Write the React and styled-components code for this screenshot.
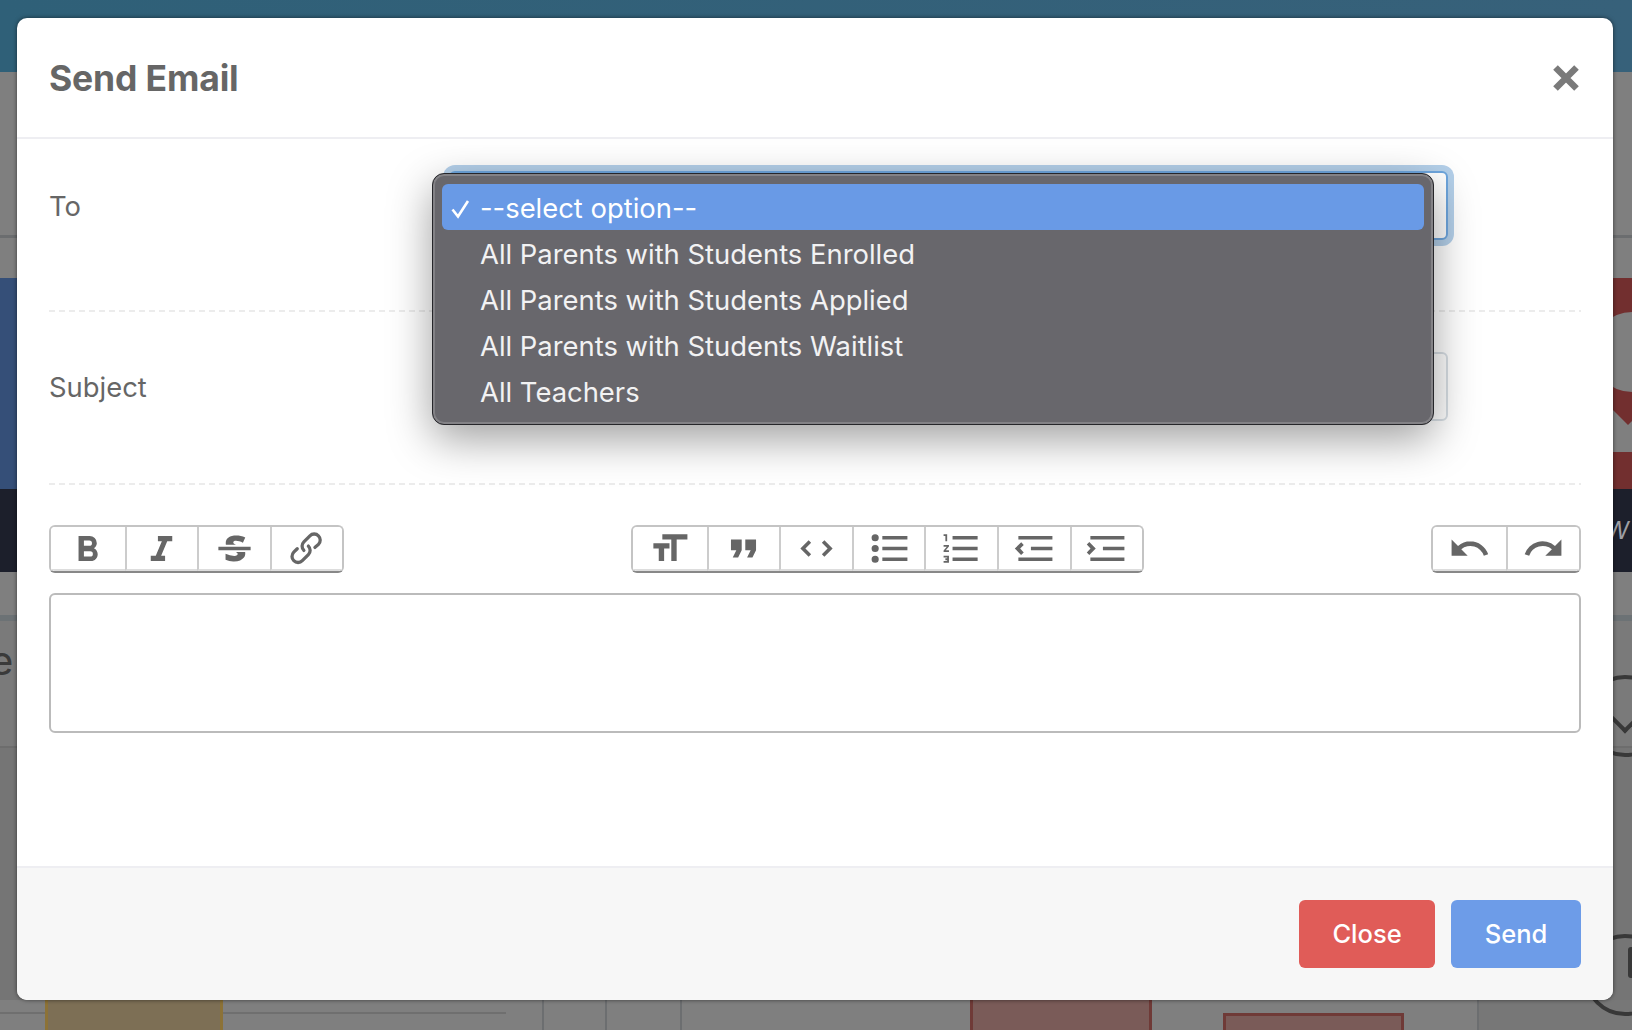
import React from 'react';
import styled, { createGlobalStyle } from 'styled-components';

const Global = createGlobalStyle`
  html, body { margin: 0; padding: 0; height: 100%; background: #7f7f7f; }
  body { font-family: Inter, "Noto Sans", "Liberation Sans", sans-serif; overflow: hidden; }
  * { box-sizing: border-box; }
`;

/* ---------- dimmed page behind the dialog ---------- */
const Page = styled.div`
  width: 1632px;
  height: 1030px;
  display: flex;
  flex-direction: column;
  overflow: hidden;
  background: #7f7f7f;
`;
const TopBar = styled.div`
  height: 72px;
  background: linear-gradient(90deg, #2f6078, #37617a);
`;
const GrayBand = styled.div`
  height: ${p => p.$h}px;
  background: ${p => p.$bg || '#7f7f7f'};
  border-bottom: ${p => (p.$line ? `${p.$line}px solid #6b6d6f` : 'none')};
`;
const Hero = styled.div`
  height: 211px;
  display: flex;
  position: relative;
  overflow: hidden;
`;
const HeroLeft = styled.div`
  flex: 1;
  background: #354f78;
`;
const HeroRight = styled.div`
  width: 400px;
  background: #722f2f;
`;
const HeroMark = styled.svg`
  position: absolute;
  right: 0;
  top: 0;
  width: 60px;
  height: 211px;
`;
const DarkBand = styled.div`
  height: 83px;
  background: #1c1f2b;
  display: flex;
  align-items: center;
  justify-content: flex-end;
  padding-right: 3px;
  color: #9d9fa4;
  font-size: 24px;
  font-style: italic;
`;
const PeekRow = styled.div`
  height: 127px;
  display: flex;
  align-items: center;
  border-bottom: 2px solid #6d6d6d;
  background: #7a7a7a;
`;
const PeekLetter = styled.span`
  font-size: 40px;
  color: #3a3a3a;
  margin-left: -10px;
  position: relative;
  top: -23px;
`;
const Middle = styled.div`
  flex: 1;
  position: relative;
  background: #757575;
`;
const Circle = styled.div`
  position: absolute;
  left: 1584px;
  top: ${p => p.$top}px;
  width: 82px;
  height: 82px;
  border: 4px solid #383838;
  border-radius: 50%;
`;
const Chevron = styled.div`
  position: absolute;
  left: 1612px;
  top: -46px;
  width: 26px;
  height: 26px;
  border-right: 4px solid #383838;
  border-bottom: 4px solid #383838;
  transform: rotate(45deg);
`;
const Handle = styled.div`
  position: absolute;
  left: 1628px;
  top: 199px;
  width: 8px;
  height: 31px;
  border-radius: 3px;
  background: #383838;
`;
const BottomRow = styled.div`
  height: 30px;
  display: flex;
  background: #7f7f7f;
`;
const TableCell = styled.div`
  width: ${p => p.$w}px;
  flex: ${p => (p.$grow ? 1 : 'none')};
  border-left: ${p => (p.$rule ? '2px solid #6c6e70' : 'none')};
  background: ${p => p.$bg || 'transparent'};
`;
const RuledCell = styled.div`
  width: 542px;
  flex: none;
  display: flex;
  padding-left: 45px;
  background: linear-gradient(#6f6f6f, #6f6f6f) 0 12px / 506px 2px no-repeat;
`;
const Swatch = styled.div`
  width: ${p => p.$w}px;
  flex: none;
  margin-top: ${p => p.$top || 0}px;
  background: ${p => p.$bg};
  border: 3px solid ${p => p.$edge};
  border-bottom: none;
  border-top-width: ${p => (p.$top ? 3 : 0)}px;
`;

/* ---------- dialog ---------- */
const Modal = styled.div`
  position: absolute;
  left: 17px;
  top: 18px;
  width: 1596px;
  height: 982px;
  display: flex;
  flex-direction: column;
  background: #fff;
  border-radius: 10px;
  box-shadow: 0 0 4px rgba(0, 0, 0, 0.55);
  overflow: hidden;
  color: #666;
`;
const Header = styled.header`
  height: 121px;
  flex: none;
  display: flex;
  align-items: center;
  justify-content: space-between;
  padding: 0 34px 0 32px;
  border-bottom: 2px solid #eeeef2;
`;
const Title = styled.h2`
  margin: 0;
  padding-top: 2px;
  font-size: 35.5px;
  font-weight: 700;
  color: #666;
  letter-spacing: -0.15px;
`;
const CloseIcon = styled.svg`
  width: 26px;
  height: 26px;
  display: block;
`;
const Body = styled.div`
  flex: 1;
  padding: 0 32px;
`;
const FormRow = styled.div`
  display: flex;
  padding: ${p => p.$top}px 0 ${p => p.$bottom}px;
`;
const Label = styled.label`
  width: 400px;
  flex: none;
  display: flex;
  align-items: center;
  font-size: 27.4px;
  color: #666;
  height: 69px;
  padding-top: 1px;
`;
const Control = styled.div`
  position: relative;
  width: 999px;
  height: 69px;
  background: #fff;
  border-radius: 6px;
  border: 2px solid ${p => (p.$focus ? '#6ea6de' : '#d8dfe5')};
  box-shadow: ${p => (p.$focus ? '0 0 0 6px #b4d0ea' : 'none')};
`;
const Dashed = styled.div`
  height: 2px;
  background: repeating-linear-gradient(90deg, #ececec 0 6px, transparent 6px 10px);
`;
const Menu = styled.ul`
  position: absolute;
  z-index: 2;
  left: -19px;
  top: 0;
  width: 1002px;
  height: 252px;
  margin: 0;
  padding: 10px 9px;
  list-style: none;
  background: #68676c;
  border: 1px solid #26262a;
  border-radius: 12px;
  box-shadow: inset 0 0 0 2px rgba(255, 255, 255, 0.18), 0 14px 44px rgba(0, 0, 0, 0.38);
`;
const Option = styled.li`
  height: 46px;
  display: flex;
  align-items: center;
  position: relative;
  padding: 2px 0 0 38px;
  font-size: 27.4px;
  color: ${p => (p.$selected ? '#fff' : '#f2f2f3')};
  background: ${p => (p.$selected ? '#699ae6' : 'transparent')};
  border-radius: 6px;
`;
const Tick = styled.svg`
  position: absolute;
  left: 8px;
  top: 14px;
  width: 21px;
  height: 21px;
`;
const Toolbar = styled.div`
  display: flex;
  justify-content: space-between;
  margin: 40px 0 20px;
`;
const ToolGroup = styled.div`
  display: flex;
  height: 48px;
  border: 2px solid #c4c4c4;
  border-bottom-color: #888;
  border-radius: 6px;
  overflow: hidden;
`;
const ToolButton = styled.button`
  width: ${p => (p.$first ? 73.5 : 72.6)}px;
  padding: 0;
  display: flex;
  align-items: center;
  justify-content: center;
  background: #fff;
  border: none;
  border-left: ${p => (p.$first ? 'none' : '2px solid #ccc')};
  border-bottom: 2px solid #ddd;
`;
const Glyph = styled.svg`
  width: 43px;
  height: 43px;
  fill: #666;
  display: block;
  flex: none;
`;
const Editor = styled.div`
  height: 140px;
  border: 2px solid #bbb;
  border-radius: 6px;
  background: #fff;
`;
const Footer = styled.footer`
  height: 134px;
  flex: none;
  display: flex;
  justify-content: flex-end;
  align-items: center;
  gap: 16px;
  padding: 0 32px;
  background: #f7f7f7;
  border-top: 2px solid #eeeef2;
`;
const ActionButton = styled.button`
  width: ${p => p.$w}px;
  height: 68px;
  padding: 0 0 2px;
  border: none;
  border-radius: 6px;
  background: ${p => p.$bg};
  color: #fff;
  font: 500 25.5px Inter, "Noto Sans", sans-serif;
`;

const icons = {
  bold: 'M15.6 11.8c1-.7 1.6-1.8 1.6-2.8a4 4 0 0 0-4-4H7v14h7c2.1 0 3.7-1.7 3.7-3.8 0-1.5-.8-2.8-2.1-3.4zM10 7.5h3a1.5 1.5 0 1 1 0 3h-3v-3zm3.5 9H10v-3h3.5a1.5 1.5 0 1 1 0 3z',
  italic: 'M10 5v3h2.2l-3.4 8H6v3h8v-3h-2.2l3.4-8H18V5h-8z',
  strike: 'M12.73 14l.28.14c.26.15.45.3.57.44.12.14.18.3.18.5 0 .3-.15.56-.44.75-.3.2-.76.3-1.39.3A13.52 13.52 0 0 1 7 14.95v3.37a10.64 10.64 0 0 0 4.84.88c1.26 0 2.35-.19 3.28-.56.93-.37 1.64-.9 2.14-1.57s.74-1.45.74-2.32c0-.26-.02-.5-.06-.75h-5.21zm-5.5-4c-.08-.34-.12-.7-.12-1.1 0-1.29.52-2.3 1.58-3.02 1.05-.72 2.5-1.08 4.34-1.08 1.62 0 3.28.34 4.97 1l-1.3 2.93c-1.47-.6-2.73-1.01-3.8-1.01-.55 0-.96.08-1.2.26-.26.17-.38.38-.38.64 0 .27.16.52.48.74.17.12.53.3 1.05.53H7.23zM3 13h18v-2H3v2z',
  link: 'M9.88 13.7a4.3 4.3 0 0 1 0-6.07l3.37-3.37a4.26 4.26 0 0 1 6.07 0 4.3 4.3 0 0 1 0 6.06l-1.96 1.72a.91.91 0 1 1-1.3-1.3l1.97-1.71a2.46 2.46 0 0 0-3.48-3.48l-3.38 3.37a2.46 2.46 0 0 0 0 3.48.91.91 0 1 1-1.3 1.3z M4.25 19.46a4.3 4.3 0 0 1 0-6.07l1.93-1.9a.91.91 0 1 1 1.3 1.3l-1.93 1.9a2.46 2.46 0 0 0 3.48 3.48l3.37-3.38c.96-.96.96-2.52 0-3.48a.91.91 0 1 1 1.3-1.3 4.3 4.3 0 0 1 0 6.07l-3.38 3.38a4.26 4.26 0 0 1-6.07 0z',
  heading: 'M12 9v3H9v7H6v-7H3V9h9zM8 4h14v3h-6v12h-3V7H8V4z',
  quote: 'M6 17h3l2-4V7H5v6h3zm8 0h3l2-4V7h-6v6h3z',
  code: 'M18.2 12L15 15.2l1.4 1.4L21 12l-4.6-4.6L15 8.8l3.2 3.2zM5.8 12L9 8.8 7.6 7.4 3 12l4.6 4.6L9 15.2 5.8 12z',
  bullets: 'M4 4a2 2 0 1 0 0 4 2 2 0 0 0 0-4zm0 6a2 2 0 1 0 0 4 2 2 0 0 0 0-4zm0 6a2 2 0 1 0 0 4 2 2 0 0 0 0-4zm4 3h14v-2H8v2zm0-6h14v-2H8v2zm0-8v2h14V5H8z',
  numbers: 'M2 17h2v.5H3v1h1v.5H2v1h3v-4H2v1zm1-9h1V4H2v1h1v3zm-1 3h1.8L2 13.1v.9h3v-1H3.2L5 10.9V10H2v1zm5-6v2h14V5H7zm0 14h14v-2H7v2zm0-6h14v-2H7v2z',
  outdent: 'M3 19h19v-2H3v2zm7-6h12v-2H10v2zm-8.3-.3l2.8 2.9L6 14.2 4 12l2-2-1.4-1.5L1 12l.7.7zM3 5v2h19V5H3z',
  indent: 'M3 19h19v-2H3v2zm7-6h12v-2H10v2zm-6.9-1L1 14.2l1.4 1.4L6 12l-.7-.7-2.9-2.9L1 9.8 3.1 12zM3 5v2h19V5H3z',
  undo: 'M12.5 8c-2.6 0-5 1-6.9 2.6L2 7v9h9l-3.6-3.6A8 8 0 0 1 20 16l2.4-.8a10.5 10.5 0 0 0-10-7.2z',
  redo: 'M18.4 10.6a10.5 10.5 0 0 0-16.9 4.6L4 16a8 8 0 0 1 12.7-3.6L13 16h9V7l-3.6 3.6z',
};

const groups = [
  ['bold', 'italic', 'strike', 'link'],
  ['heading', 'quote', 'code', 'bullets', 'numbers', 'outdent', 'indent'],
  ['undo', 'redo'],
];

const options = [
  '--select option--',
  'All Parents with Students Enrolled',
  'All Parents with Students Applied',
  'All Parents with Students Waitlist',
  'All Teachers',
];

export default function App() {
  return (
    <>
      <Global />
      <Page>
        <TopBar />
        <GrayBand $h={166} $line={3} />
        <GrayBand $h={40} />
        <Hero>
          <HeroLeft />
          <HeroRight />
          <HeroMark viewBox="0 0 60 211">
            <circle cx="60" cy="74" r="40" fill="#7f7f7f" />
            <path d="M0 91 L56 147 L60 143 L60 174 L0 174 Z" fill="#7f7f7f" />
          </HeroMark>
        </Hero>
        <DarkBand>W</DarkBand>
        <GrayBand $h={43} $bg="#7f7f7f" />
        <GrayBand $h={6} $bg="#6c7275" />
        <PeekRow>
          <PeekLetter>e</PeekLetter>
        </PeekRow>
        <Middle>
          <Circle $top={-73} />
          <Chevron />
          <Circle $top={186} />
          <Handle />
        </Middle>
        <BottomRow>
          <RuledCell>
            <Swatch $w={178} $bg="#7d6f55" $edge="#8c7237" />
          </RuledCell>
          <TableCell $w={63} $rule />
          <TableCell $w={75} $rule />
          <TableCell $w={290} $rule />
          <Swatch $w={182} $bg="#7a5b58" $edge="#6f3a37" />
          <TableCell $w={71} />
          <Swatch $w={181} $top={13} $bg="#7a5b58" $edge="#6f3a37" />
          <TableCell $w={73} />
          <TableCell $grow $rule $bg="#777" />
        </BottomRow>
      </Page>

      <Modal>
        <Header>
          <Title>Send Email</Title>
          <CloseIcon viewBox="0 0 26 26">
            <path d="M2.5 2.5 L23.5 23.5 M23.5 2.5 L2.5 23.5" stroke="#7a7a7a" strokeWidth="6.5" />
          </CloseIcon>
        </Header>
        <Body>
          <FormRow $top={32} $bottom={70}>
            <Label>To</Label>
            <Control $focus>
              <Menu>
                {options.map((o, i) => (
                  <Option key={o} $selected={i === 0}>
                    {i === 0 && (
                      <Tick viewBox="0 0 21 21">
                        <path d="M2.5 11.5 L8 18.5 L18 3" fill="none" stroke="#fff" strokeWidth="2.6" />
                      </Tick>
                    )}
                    {o}
                  </Option>
                ))}
              </Menu>
            </Control>
          </FormRow>
          <Dashed />
          <FormRow $top={40} $bottom={62}>
            <Label>Subject</Label>
            <Control />
          </FormRow>
          <Dashed />
          <Toolbar>
            {groups.map((g, gi) => (
              <ToolGroup key={gi}>
                {g.map((name, i) => (
                  <ToolButton key={name} $first={i === 0} aria-label={name}>
                    <Glyph viewBox="0 0 24 24">
                      <path d={icons[name]} />
                    </Glyph>
                  </ToolButton>
                ))}
              </ToolGroup>
            ))}
          </Toolbar>
          <Editor />
        </Body>
        <Footer>
          <ActionButton $w={136} $bg="#e05c58">Close</ActionButton>
          <ActionButton $w={130} $bg="#6d9ce8">Send</ActionButton>
        </Footer>
      </Modal>
    </>
  );
}
